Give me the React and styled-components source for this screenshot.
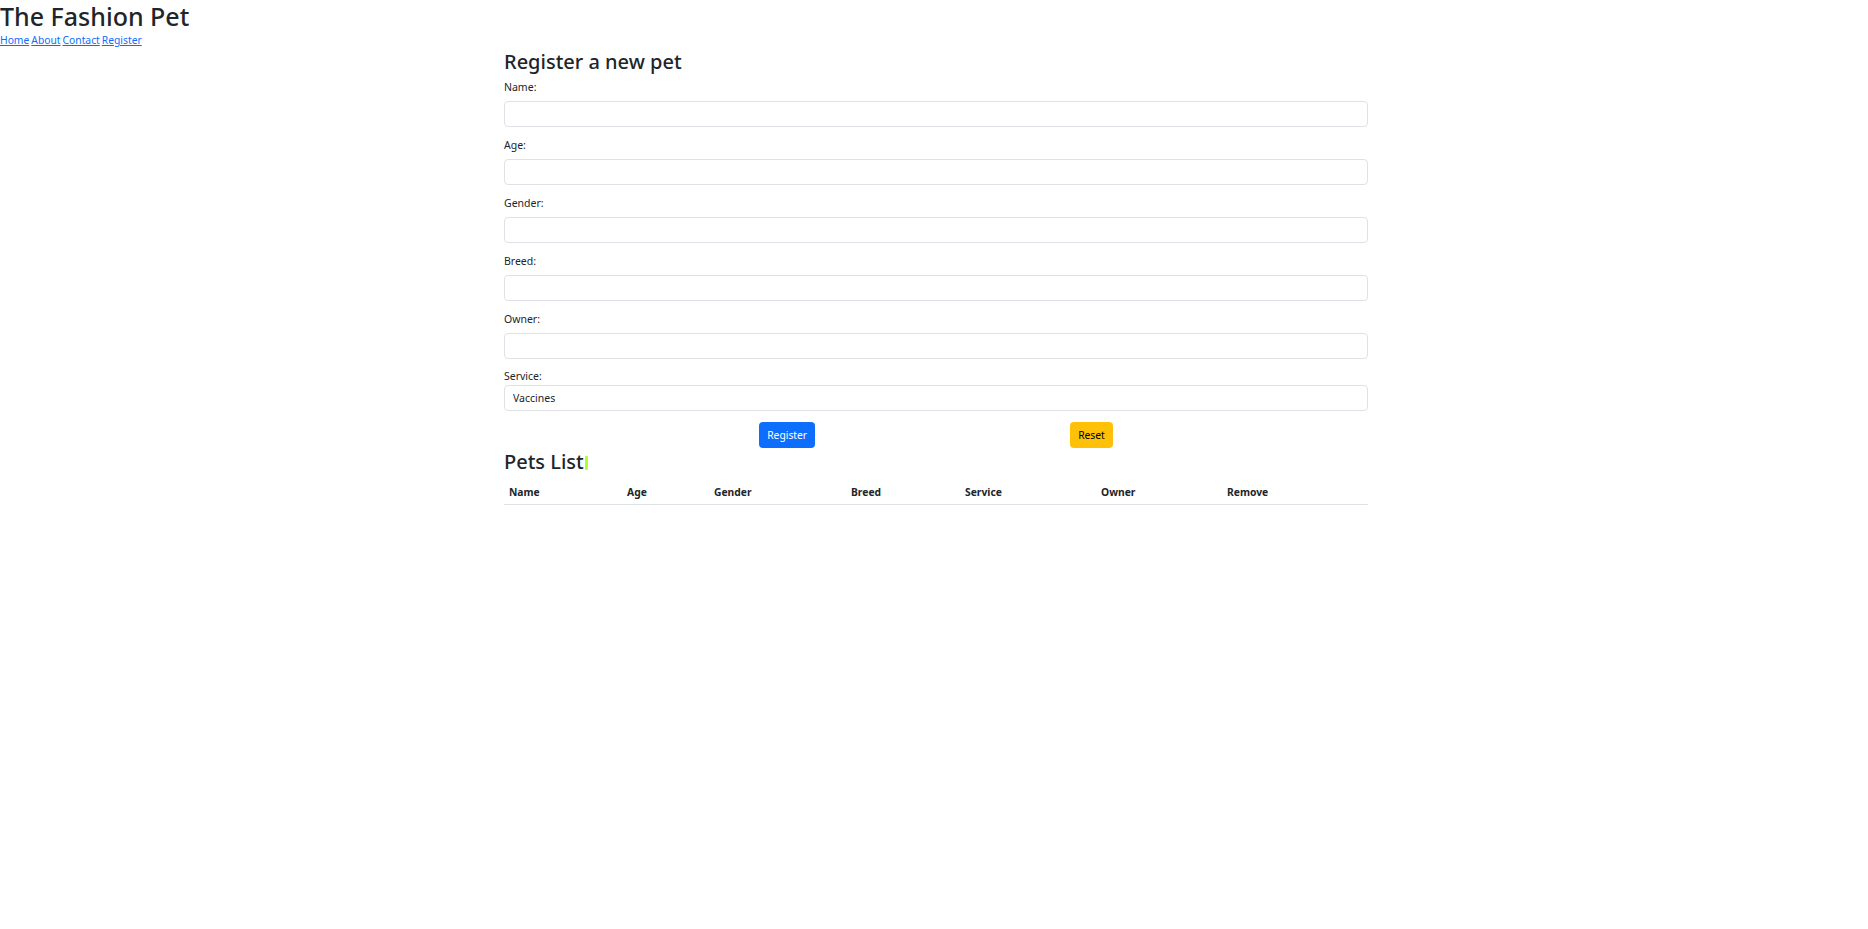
import React, { useState } from "react";
import styled, { createGlobalStyle } from "styled-components";

const GlobalStyle = createGlobalStyle`
    body {
        margin: 0;
        background: #fff;
        color: #212529;
        font-family: "Noto Sans", "Liberation Sans", sans-serif;
    }
    * {
        box-sizing: border-box;
    }
`;

const Title = styled.h1`
    margin: 0;
    font-size: 25px;
    font-weight: 500;
    line-height: 33px;
`;

const Nav = styled.nav`
    font-size: 10.3px;
    line-height: 15px;
    a {
        color: #0d6efd;
        text-decoration: underline;
        margin-right: 2px;
    }
`;

const Container = styled.div`
    width: 864px;
    margin-left: calc(50% - 430px);
`;

const Heading = styled.h2`
    margin: 0 0 2px;
    font-size: 20px;
    font-weight: 500;
    line-height: 28px;
`;

const Field = styled.div`
    margin-bottom: ${props => (props.last ? "11px" : "9px")};
`;

const Label = styled.label`
    display: block;
    font-size: 10.5px;
    line-height: ${props => (props.tight ? "17px" : "19px")};
    margin-bottom: ${props => (props.tight ? "0" : "4px")};
`;

const Input = styled.input`
    display: block;
    width: 100%;
    height: 26px;
    border: 1px solid #dee2e6;
    border-radius: 4px;
    padding: 0 9px;
    font-family: inherit;
    font-size: 10.5px;
    color: #212529;
    outline: none;
`;

const Select = styled.select`
    display: block;
    width: 100%;
    height: 26px;
    border: 1px solid #dee2e6;
    border-radius: 4px;
    padding: 0 8px;
    font-family: inherit;
    font-size: 10.5px;
    color: #212529;
    background: #fff;
    appearance: none;
    outline: none;
`;

const Buttons = styled.div`
    display: flex;
    justify-content: center;
    gap: 255px;
`;

const Button = styled.button`
    height: 26px;
    padding: 0 8px;
    border: none;
    border-radius: 4px;
    font-family: inherit;
    font-size: 10.3px;
    background: ${props => (props.variant === "warning" ? "#ffc107" : "#0d6efd")};
    color: ${props => (props.variant === "warning" ? "#000" : "#fff")};
    cursor: pointer;
`;

const Mark = styled.span`
    display: inline-block;
    width: 3px;
    height: 14px;
    margin-left: 1px;
    vertical-align: -1px;
    background: greenyellow;
    border-radius: 1px;
`;

const Table = styled.table`
    width: 100%;
    border-collapse: collapse;
    margin-top: 4px;
    th {
        text-align: left;
        font-size: 10.3px;
        font-weight: 700;
        padding: 5px 5px 4px;
        line-height: 15px;
        border-bottom: 1px solid #dee2e6;
    }
`;

const columns = [
    ["Name", 118],
    ["Age", 87],
    ["Gender", 137],
    ["Breed", 114],
    ["Service", 136],
    ["Owner", 126],
    ["Remove", 146],
];

const fields = ["Name", "Age", "Gender", "Breed", "Owner"];

export default () => {
    const [service, setService] = useState("Vaccines");
    return (
        <>
            <GlobalStyle />
            <Title>The Fashion Pet</Title>
            <Nav>
                <a href="#">Home</a>
                <a href="#">About</a>
                <a href="#">Contact</a>
                <a href="#">Register</a>
            </Nav>
            <Container>
                <Heading>Register a new pet</Heading>
                {fields.map(f => (
                    <Field key={f}>
                        <Label>{f}:</Label>
                        <Input type="text" />
                    </Field>
                ))}
                <Field last>
                    <Label tight>Service:</Label>
                    <Select value={service} onChange={e => setService(e.target.value)}>
                        <option>Vaccines</option>
                        <option>Grooming</option>
                        <option>Nails</option>
                    </Select>
                </Field>
                <Buttons>
                    <Button>Register</Button>
                    <Button variant="warning">Reset</Button>
                </Buttons>
                <Heading>
                    Pets List<Mark />
                </Heading>
                <Table>
                    <thead>
                        <tr>
                            {columns.map(([c, w]) => (
                                <th key={c} style={{ width: w }}>{c}</th>
                            ))}
                        </tr>
                    </thead>
                    <tbody></tbody>
                </Table>
            </Container>
        </>
    );
};
